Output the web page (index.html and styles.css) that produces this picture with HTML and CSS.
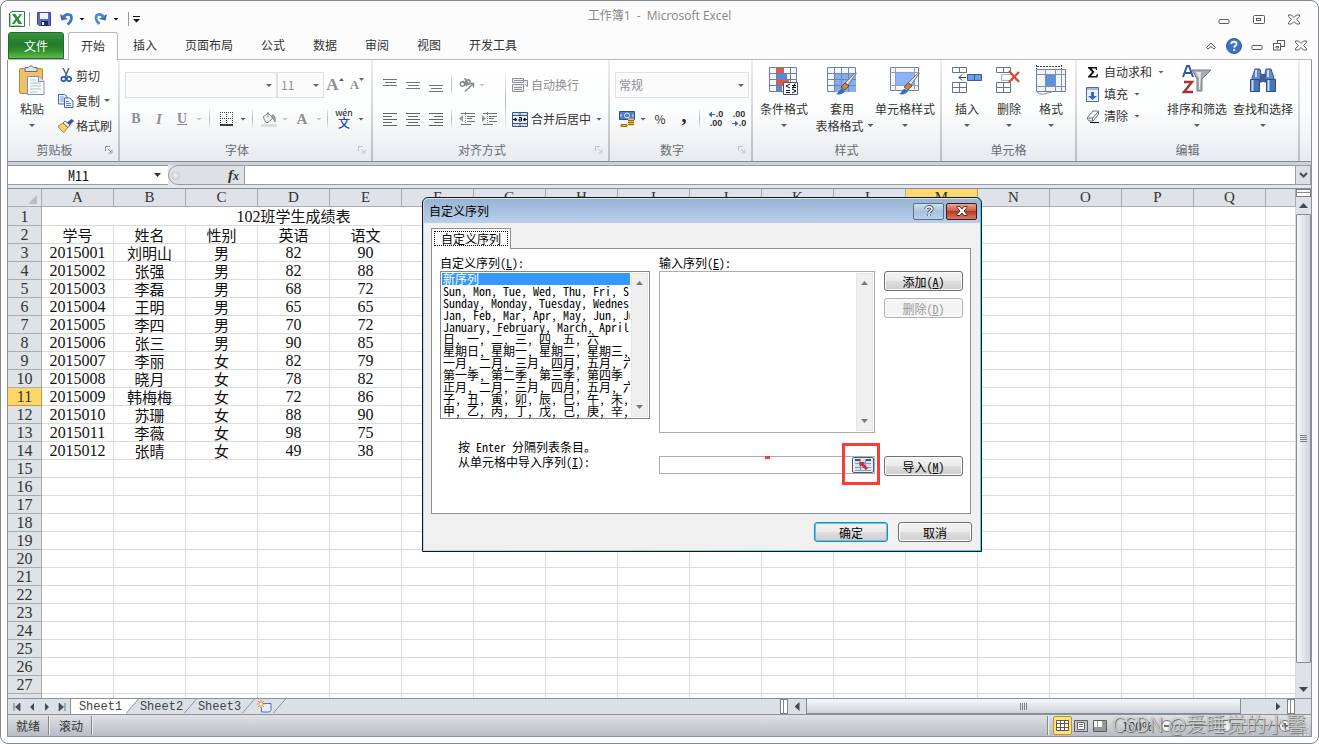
FILE: index.html
```html
<!DOCTYPE html>
<html lang="zh-CN">
<head>
<meta charset="utf-8">
<title>工作簿1 - Microsoft Excel</title>
<link rel="stylesheet" href="styles.css">
</head>
<body>
<div class="window">
  <header class="titlebar">
    <div class="qat">
      <svg width="16" height="16" viewBox="0 0 16 16"><path d="M.5 2.500 3 .5h12.500v15H.5z" fill="#fff" stroke="#2c7a45"/><path d="M1.500 3v11.500h11" stroke="#9ed0a0" fill="none"/><path d="M3 3h3.500l2 3.500L11 3h2L9.700 8l3.500 5H9.700L7.600 9.700 5.500 13H2.800l3.600-5z" fill="#2b8f35"/></svg>
      <i class="bar"></i>
      <button aria-label="保存"><svg width="14" height="14" viewBox="0 0 14 14"><path d="M.5.5h13v13H2L.5 12z" fill="#5d68cc" stroke="#3f479c"/><path d="M3 1h8v6H3z" fill="#eef4ff"/><path d="M4 9h7v5H4z" fill="#25295c"/><path d="M5 10h2v3H5z" fill="#fff"/></svg></button>
      <button class="undo" aria-label="撤消"><svg width="14" height="14" viewBox="0 0 14 14"><path d="M0 2l1.500 6.500L8 7z" fill="#3668b8"/><path d="M3 5.500C6 1 12 1.500 11.500 6.500c-.2 2.500-2 4.500-4 6" fill="none" stroke="#3f74c6" stroke-width="2.600"/></svg></button>
      <i class="caret dark"></i>
      <button class="undo" aria-label="恢复"><svg width="14" height="14" viewBox="0 0 14 14"><path d="M13 2l-1.500 6.500L5 7z" fill="#3668b8"/><path d="M10 5.500C7 1 1.500 1.500 2 6.500c.2 2.500 2 4 3.500 5.500" fill="none" stroke="#4f88d8" stroke-width="2.600"/></svg></button>
      <i class="caret dark"></i>
      <i class="bar second"></i>
      <svg width="7" height="7" viewBox="0 0 7 7"><path d="M0 0h7v1H0zM0 3h7L3.500 6.500z" fill="#111"/></svg>
    </div>
    <h1>工作簿1&nbsp; -&nbsp; Microsoft Excel</h1>
    <div class="winctl">
      <button aria-label="最小化"><svg width="12" height="11" viewBox="0 0 12 11"><rect x="1" y="5.500" width="10" height="4" rx="1" fill="#fff" stroke="#555a66"/></svg></button>
      <button aria-label="还原"><svg width="12" height="11" viewBox="0 0 12 11"><rect x=".5" y="1.500" width="11" height="8" rx="1" fill="#fff" stroke="#555a66"/><rect x="3.500" y="4.500" width="4" height="2" fill="#fff" stroke="#555a66"/></svg></button>
      <button aria-label="关闭"><svg width="12" height="11" viewBox="0 0 12 11"><path d="M.5 1h3L6 3.500 8.500 1h3v1.500L8.500 5.500l3 3V10h-3L6 7.500 3.500 10h-3V8.500l3-3-3-3z" fill="#fff" stroke="#555a66"/></svg></button>
    </div>
  </header>

  <nav class="tabs">
    <button class="file">文件</button>
    <button class="tab active">开始</button>
    <button class="tab">插入</button>
    <button class="tab">页面布局</button>
    <button class="tab">公式</button>
    <button class="tab">数据</button>
    <button class="tab">审阅</button>
    <button class="tab">视图</button>
    <button class="tab">开发工具</button>
    <div class="docctl">
      <button aria-label="折叠功能区"><svg width="10" height="8" viewBox="0 0 10 8"><path d="M.5 5.500 5 1l4.500 4.500L8 7 5 4.500 2 7z" fill="#fff" stroke="#555a66"/></svg></button>
      <button aria-label="帮助"><svg width="16" height="16" viewBox="0 0 16 16"><circle cx="8" cy="8" r="7.500" fill="#3f73c6" stroke="#2b58a5"/><path d="M5.300 6C5.500 3 10.500 3 10.500 6c0 1.700-2.300 1.700-2.300 3.500M8.200 11v1.800" stroke="#fff" stroke-width="1.900" fill="none"/></svg></button>
      <button aria-label="最小化窗口"><svg width="12" height="11" viewBox="0 0 12 11"><rect x="1" y="5.500" width="10" height="4" rx="1" fill="#fff" stroke="#555a66"/></svg></button>
      <button aria-label="还原窗口"><svg width="12" height="11" viewBox="0 0 12 11"><rect x="4.500" y=".5" width="7" height="6" fill="#fff" stroke="#555a66"/><rect x=".5" y="3.500" width="7" height="6.500" fill="#fff" stroke="#555a66"/><path d="M3 6.500h2.500v1.500H3z" fill="none" stroke="#555a66"/></svg></button>
      <button aria-label="关闭窗口"><svg width="12" height="11" viewBox="0 0 12 11"><path d="M.5 1h3L6 3.500 8.500 1h3v1.500L8.500 5.500l3 3V10h-3L6 7.500 3.500 10h-3V8.500l3-3-3-3z" fill="#fff" stroke="#555a66"/></svg></button>
    </div>
  </nav>

  <div class="client">
    <section class="ribbon">
      <div class="group g-clip">
        <div class="tools">
          <button class="big w46"><svg width="28" height="31" viewBox="0 0 28 31"><rect x="1.500" y="3.500" width="23" height="25" rx="1.500" fill="#f0c067" stroke="#b98a3e"/><path d="M7 2.500h3.500Q13-1 15.500 2.500H19v4H7z" fill="#dfe2e6" stroke="#6a6d72"/><path d="M9.500 11.500h11l5.500 5v13H9.500z" fill="#fff" stroke="#7c90b4"/><path d="M20.500 11.500v5H26" fill="#dbe5f5" stroke="#7c90b4"/><path d="M12 15h6M12 18h11M12 21h11M12 24h11M12 27h8" stroke="#a9bbd9"/></svg><span>粘贴</span><i class="caret"></i></button>
          <div class="stack pitch25">
            <button class="small"><svg width="16" height="15" viewBox="0 0 16 15"><path d="M5 0l4.500 9M11 0L7 9" stroke="#51688f" stroke-width="1.500"/><circle cx="5.500" cy="11" r="2.200" fill="none" stroke="#2c59b5" stroke-width="1.700"/><circle cx="11" cy="11" r="2.200" fill="none" stroke="#2c59b5" stroke-width="1.700"/></svg>剪切</button>
            <button class="small"><svg width="16" height="14" viewBox="0 0 16 14"><path d="M.5.500h6l2.500 2V10H.5z" fill="#e8f0fc" stroke="#3e66ad"/><path d="M2 3h4M2 5h4M2 7h4" stroke="#7f9fd2"/><path d="M6.500 4h5l3.500 3v6.500H6.500z" fill="#f4f8ff" stroke="#3e66ad"/><path d="M8 7.500h3M8 9.500h5M8 11.500h5" stroke="#5f86c8"/></svg>复制<i class="caret"></i></button>
            <button class="small"><svg width="16" height="14" viewBox="0 0 16 14"><path d="M0 7l5-3 5 4-4 5.500C4 12 1 10 0 7z" fill="#f1d36e" stroke="#9a7a28" stroke-width=".8"/><path d="M5 4l2-2 5 4-2 2.500z" fill="#eee" stroke="#555" stroke-width=".8"/><path d="M9 3.500L13.500 0 16 2l-4 4z" fill="#3d4f96"/></svg>格式刷</button>
          </div>
        </div>
        <div class="caption"><span>剪贴板</span><svg class="launch" viewBox="0 0 8 8"><path d="M.5 5V.5H5M3 3l3 3M7 3.500V7H3.500" stroke="#92969c" fill="none"/></svg></div>
      </div>

      <div class="group g-font">
        <div class="tools col">
          <div class="line">
            <select class="w152" aria-label="字体" disabled><option></option></select><select class="w47" aria-label="字号" disabled><option>11</option></select>
            <button class="t22 serif muted big-a">A<svg width="5" height="3" viewBox="0 0 5 3"><path d="M0 3l2.500-3L5 3z" fill="#666"/></svg></button><button class="t22 serif muted sm-a">A<svg width="5" height="3" viewBox="0 0 5 3"><path d="M0 0l2.500 3L5 0z" fill="#666"/></svg></button>
          </div>
          <div class="line">
            <button class="t22 serif muted"><b>B</b></button><button class="t24 serif muted"><em>I</em></button><button class="t22 serif muted"><u>U</u></button><i class="caret pale c12"></i>
            <i class="sep"></i>
            <button class="t24" aria-label="边框"><svg width="13" height="14" viewBox="0 0 13 14"><path d="M0 .5h13M.5 0v12M12.500 0v12M6.500 0v12M0 6.500h13" stroke="#444" stroke-dasharray="1 1"/><path d="M0 13h13" stroke="#000" stroke-width="1.500"/></svg></button><i class="caret c10"></i>
            <i class="sep"></i>
            <button class="t24" aria-label="填充颜色"><svg width="16" height="16" viewBox="0 0 16 16"><path d="M2 6l5-4 5 5-5 4.500H5z" fill="#f2f2f2" stroke="#8a8a8a"/><path d="M7 1v5M11 4c3 0 3.500 3 3 7-1-2-2-3-3-4z" fill="#a5a5a5" stroke="#8a8a8a"/><path d="M0 13h16v3H0z" fill="#dedede"/></svg></button><i class="caret pale c8"></i>
            <button class="t26 serif muted">A</button><i class="caret pale c8"></i>
            <i class="sep"></i>
            <button class="t24 wen"><span>wén</span><b>文</b></button><i class="caret c10"></i>
          </div>
        </div>
        <div class="caption"><span>字体</span><svg class="launch" viewBox="0 0 8 8"><path d="M.5 5V.5H5M3 3l3 3M7 3.500V7H3.500" stroke="#c2c5ca" fill="none"/></svg></div>
      </div>

      <div class="group g-align">
        <div class="tools">
          <div class="pair w126">
            <div class="line">
              <button class="t23" aria-label="顶端对齐"><svg width="14" height="14" viewBox="0 0 14 14"><path d="M0 1.500h14M2 4.500h11M0 7.500h14" stroke="#70747a"/></svg></button><button class="t23" aria-label="垂直居中"><svg width="14" height="14" viewBox="0 0 14 14"><path d="M0 4.500h14M2 7.500h11M0 10.500h14" stroke="#70747a"/></svg></button><button class="t23" aria-label="底端对齐"><svg width="14" height="14" viewBox="0 0 14 14"><path d="M0 7.500h14M2 10.500h11M0 13.500h14" stroke="#70747a"/></svg></button>
              <i class="sep"></i>
              <button class="t22" aria-label="方向"><svg width="16" height="14" viewBox="0 0 16 14"><g fill="none" stroke="#84878c" stroke-width="1.400"><path d="M6 13.500L14 6M10.500 5.500H14.500v4"/><circle cx="3.500" cy="6" r="2.200"/><path d="M4 3l4 5"/><circle cx="9" cy="4" r="2.200"/><path d="M5.500 0l4 6"/></g></svg></button><i class="caret pale c8"></i>
            </div>
            <div class="line">
              <button class="t23" aria-label="左对齐"><svg width="14" height="13" viewBox="0 0 14 13"><path d="M0 .5h14M0 3.500h9M0 6.500h14M0 9.500h9M0 12.500h14" stroke="#60646a"/></svg></button><button class="t23" aria-label="居中"><svg width="14" height="13" viewBox="0 0 14 13"><path d="M0 .5h14M2 3.500h10M0 6.500h14M2 9.500h10M0 12.500h14" stroke="#60646a"/></svg></button><button class="t23" aria-label="右对齐"><svg width="14" height="13" viewBox="0 0 14 13"><path d="M0 .5h14M5 3.500h9M0 6.500h14M5 9.500h9M0 12.500h14" stroke="#60646a"/></svg></button>
              <i class="sep"></i>
              <button class="t22" aria-label="减少缩进"><svg width="16" height="14" viewBox="0 0 16 14"><path d="M6.500 0v14" stroke="#888" stroke-dasharray="1 1"/><path d="M2 1.500h14M8 4.500h8M8 6.500h5M8 9.500h8M2 12.500h10" stroke="#70747a"/><path d="M0 6.500L4 3v7z" fill="#999"/></svg></button><button class="t22" aria-label="增加缩进"><svg width="16" height="14" viewBox="0 0 16 14"><path d="M6.500 0v14" stroke="#888" stroke-dasharray="1 1"/><path d="M2 1.500h14M8 4.500h8M8 6.500h5M8 9.500h8M2 12.500h10" stroke="#70747a"/><path d="M5 6.500L1 3v7z" fill="#999"/></svg></button>
            </div>
          </div>
          <i class="sep tall"></i>
          <div class="pair">
            <button class="small muted"><svg width="16" height="16" viewBox="0 0 16 16"><path d="M.5 1.500h11v4H.5zM.5 7.500h11v7H.5zM2 3.500h13.500v6l-2-2M2 10.500h8M2 12.500h8" fill="#ececec" stroke="#909399"/></svg>自动换行</button>
            <button class="small"><svg width="16" height="15" viewBox="0 0 16 15"><path d="M.5.500h15v14H.5z" fill="#cbdcf4" stroke="#3d557d"/><path d="M0 3.500h16M0 11.500h16M8 0v4M8 11v4" stroke="#3d557d"/><path d="M1 4h14v7H1z" fill="#eef4fd"/><path d="M1 7.500h3M12 7.500h3M3 6l2 1.500L3 9zM13 6l-2 1.500L13 9zM7 5.500h2.500V9H7V7h2" stroke="#111" fill="none"/></svg>合并后居中<i class="caret"></i></button>
          </div>
        </div>
        <div class="caption"><span>对齐方式</span><svg class="launch" viewBox="0 0 8 8"><path d="M.5 5V.5H5M3 3l3 3M7 3.500V7H3.500" stroke="#c2c5ca" fill="none"/></svg></div>
      </div>

      <div class="group g-num">
        <div class="tools col">
          <div class="line"><select class="w134" aria-label="数字格式" disabled><option>常规</option></select></div>
          <div class="line">
            <button class="t24" aria-label="会计数字格式"><svg width="16" height="16" viewBox="0 0 16 16"><path d="M.5.500h15v8H.5z" fill="#4f7ccb" stroke="#294f96"/><circle cx="8" cy="4.500" r="2.500" fill="none" stroke="#dce8fb"/><path d="M2 3v3M14 3v3" stroke="#dce8fb"/><path d="M9 7.500h6v7H9z" fill="#f0bd3c"/><path d="M2 13.500h6v2H2zM9 9.500h6M9 11.500h6M9 13.500h6" stroke="#96680f" fill="#f0bd3c"/></svg></button><i class="caret c8"></i>
            <button class="t26">%</button><button class="t22 serif comma">,</button>
            <i class="sep"></i>
            <button class="t24 dec" aria-label="增加小数位数"><span><svg width="6" height="5" viewBox="0 0 6 5"><path d="M6 2.500H2M3 0L0 2.500 3 5" fill="#3767c0" stroke="#3767c0"/></svg>.0</span><span>.00</span></button><button class="t22 dec" aria-label="减少小数位数"><span>.00</span><span><svg width="6" height="5" viewBox="0 0 6 5"><path d="M0 2.500h4M3 0l3 2.500L3 5" fill="#3767c0" stroke="#3767c0"/></svg>.0</span></button>
          </div>
        </div>
        <div class="caption"><span>数字</span><svg class="launch" viewBox="0 0 8 8"><path d="M.5 5V.5H5M3 3l3 3M7 3.500V7H3.500" stroke="#c2c5ca" fill="none"/></svg></div>
      </div>

      <div class="group g-style">
        <div class="tools">
          <button class="big w54"><svg width="30" height="31" viewBox="0 0 30 31"><path d="M.5 2.500h27v24H.5z" fill="#f4f7fb" stroke="#6f7f98"/><path d="M7 3h7v6H7z" fill="#f0533c"/><path d="M7 9h11v6H7z" fill="#5b87e0"/><path d="M7 15h13v6H7z" fill="#f0533c"/><path d="M7 21h6v5H7z" fill="#5b87e0"/><path d="M7.500 2v25M14.500 2v7M21.500 2v25M0 8.500h28M0 14.500h28M0 20.500h28" stroke="#6f7f98"/><path d="M14.500 17.500h14v12h-14z" fill="#fff" stroke="#44546e"/><path d="M21 19l-4 2 4 2M17 25.500h4M17 27.500h4M23 20.500h4M23 22.500h4M26 18.500l-2 5M23 24l4 2-4 2" stroke="#111" fill="none"/></svg><span>条件格式</span><i class="caret"></i></button>
          <button class="big w62"><svg width="30" height="31" viewBox="0 0 30 31"><path d="M.5 2.500h28v24H.5z" fill="#f4f7fb" stroke="#6f8098"/><path d="M8 9h21v18H8z" fill="#86abef"/><path d="M7.500 2v25M14.500 2v25M21.500 2v25M0 8.500h29M0 14.500h29M0 20.500h29" stroke="#7185a8"/><path d="M29.500 8L21 20l-3-2L28 8z" fill="#ddd" stroke="#666" stroke-width=".8"/><path d="M18 18l4 3-4 4-4-3z" fill="#c58a40" stroke="#5c4125" stroke-width=".8"/><path d="M9 29c3-1 4-6 6-5l3 2c-1 3-6 4-9 3z" fill="#3c6cc0"/></svg><span>套用</span><span class="withcaret">表格格式<i class="caret"></i></span></button>
          <button class="big w64"><svg width="30" height="31" viewBox="0 0 30 31"><path d="M.5 2.500h28v23H.5z" fill="#f4f7fb" stroke="#6f8098"/><path d="M5.500 2v24M24.500 2v24M0 7.500h29M0 20.500h29" stroke="#8f9fb8"/><path d="M6 8h18v12H6z" fill="#8db2fb"/><path d="M29.500 8L21 20l-3-2L28 8z" fill="#ddd" stroke="#666" stroke-width=".8"/><path d="M18 18l4 3-4 4-4-3z" fill="#c58a40" stroke="#5c4125" stroke-width=".8"/><path d="M9 29c3-1 4-6 6-5l3 2c-1 3-6 4-9 3z" fill="#3c6cc0"/></svg><span>单元格样式</span><i class="caret"></i></button>
        </div>
        <div class="caption"><span>样式</span></div>
      </div>

      <div class="group g-cells">
        <div class="tools">
          <button class="big w42"><svg width="30" height="31" viewBox="0 0 30 31"><path d="M.5 2.500h14v5H.5zM7.500 2v6M.5 17.500h14v10H.5zM7.500 17v11M0 22.500h15" fill="#fff" stroke="#62738c"/><path d="M15.500 9.500h14v6h-14z" fill="#6e9be8" stroke="#3a5b99"/><path d="M22.500 9v7" stroke="#3a5b99"/><path d="M14 12.500H7M10 9.500L7 12.500l3 3" fill="none" stroke="#333e50"/></svg><span>插入</span><i class="caret"></i></button>
          <button class="big w42"><svg width="26" height="31" viewBox="0 0 26 31"><path d="M.5 2.500h14v5H.5zM7.500 2v6M.5 17.500h14v10H.5zM7.500 17v11M0 22.500h15" fill="#fff" stroke="#62738c"/><path d="M5.500 9.500h11v6h-11z" fill="#fff" stroke="#4b71c2" stroke-dasharray="1 1"/><path d="M13 6l10 11M23 7L13 17" stroke="#e9422c" stroke-width="2.200"/></svg><span>删除</span><i class="caret"></i></button>
          <button class="big w42"><svg width="32" height="31" viewBox="0 0 32 31"><path d="M1.500 0v4M26.500 0v4M2 1.500h25" stroke="#444" stroke-dasharray="2 1"/><path d="M1.500 4.500h29v22h-29z" fill="#f2f5fa" stroke="#6f8098"/><path d="M11 10h9v11h-9z" fill="#5f90e8"/><path d="M10.500 4v22M20.500 4v22M26.500 4v22M1 9.500h29M1 21.500h29M2 27q2 3 7 2l8-2" stroke="#8493aa" fill="none"/></svg><span>格式</span><i class="caret"></i></button>
        </div>
        <div class="caption"><span>单元格</span></div>
      </div>

      <div class="group g-edit">
        <div class="tools">
          <div class="stack pitch22">
            <button class="small"><svg width="14" height="14" viewBox="0 0 14 14"><path d="M2 2h9v3h-1L9.500 3.500H5.500L8.500 7l-3.500 4h5l1-2h1l-.5 3.500H2v-1L6 7 2 3z" fill="#111"/></svg>自动求和<i class="caret"></i></button>
            <button class="small"><svg width="14" height="15" viewBox="0 0 14 15"><path d="M.5.500h12v14H.5z" fill="#eaf1fc" stroke="#4b6ca8"/><path d="M1 1h11v2H1z" fill="#9db9e6"/><path d="M5 5h3v4h3l-4.500 4L2 9h3z" fill="#3767c8"/></svg>填充<i class="caret"></i></button>
            <button class="small"><svg width="14" height="13" viewBox="0 0 14 13"><path d="M1 8l6-7h5.500v3L7 11H3z" fill="#f5f7fb" stroke="#67738a"/><path d="M1 8h5.500l6-6.500M6.500 8v3" fill="none" stroke="#67738a"/><path d="M4 12.500h9" stroke="#111"/></svg>清除<i class="caret"></i></button>
          </div>
          <button class="big w66"><svg width="30" height="31" viewBox="0 0 30 31"><path d="M1 12L5 1h2l4 11M3 8h6" fill="none" stroke="#2d58b2" stroke-width="2"/><path d="M2 17h8L2 27h9" fill="none" stroke="#a83230" stroke-width="2.400"/><path d="M10 5h19l-9 9v12h-5V14z" fill="#a9adb3" stroke="#767a80"/><path d="M14 7h5l-1 17h-1V13z" fill="#e4e6e9"/></svg><span>排序和筛选</span><i class="caret"></i></button>
          <button class="big w66"><svg width="30" height="31" viewBox="0 0 30 31"><path d="M7 4h5l2 9v4H4v-4zM18 4h5l3 9v4H16v-4z" fill="#6388cb" stroke="#39588f"/><path d="M2.500 14.500h9v12h-9zM18.500 14.500h9v12h-9z" fill="#4a72bd" stroke="#2b4a80"/><path d="M12 9h6v8h-6z" fill="#3c5e9f"/><path d="M4.500 15v11M20.500 15v11M8 5v7M20 5v7" stroke="#c8daf6" stroke-width="2"/></svg><span>查找和选择</span><i class="caret"></i></button>
        </div>
        <div class="caption"><span>编辑</span></div>
      </div>
    </section>

    <div class="formula">
      <div class="namebox"><input value="M11" aria-label="名称框"><i class="caret dark wide"></i></div>
      <div class="fx"><i class="knob"></i><span>f<small>x</small></span></div>
      <input class="formula-input" aria-label="编辑栏">
      <button class="expand" aria-label="展开编辑栏"><svg width="9" height="6" viewBox="0 0 9 6"><path d="M1 1l3.500 3.500L8 1" stroke="#4a4d52" stroke-width="2" fill="none"/></svg></button>
    </div>

    <main class="workspace">
      <div class="sheet"><table id="grid"></table></div>
      <div class="vscroll">
        <i class="split"></i>
        <button aria-label="向上"><i class="tri up"></i></button>
        <i class="vthumb"></i>
        <button aria-label="向下"><i class="tri down"></i></button>
      </div>
    </main>

    <div class="sheetbar">
      <div class="navs">
        <button aria-label="第一张"><svg width="8" height="8" viewBox="0 0 8 8"><path d="M1 0v8M7 0v8L2.500 4z" fill="#444b57" stroke="#444b57" stroke-width=".7"/></svg></button>
        <button aria-label="上一张"><svg width="8" height="8" viewBox="0 0 8 8"><path d="M6 0v8L2 4z" fill="#444b57"/></svg></button>
        <button aria-label="下一张"><svg width="8" height="8" viewBox="0 0 8 8"><path d="M2 0v8l4-4z" fill="#444b57"/></svg></button>
        <button aria-label="最后一张"><svg width="8" height="8" viewBox="0 0 8 8"><path d="M7 0v8M1 0v8l4.500-4z" fill="#444b57" stroke="#444b57" stroke-width=".7"/></svg></button>
      </div>
      <button class="stab on">Sheet1</button>
      <svg class="slant" viewBox="0 0 13 15"><path d="M0 0h12L1 14H0z" fill="#fff"/><path d="M0 14.500L12.500 0" stroke="#8d95a1"/></svg>
      <button class="stab">Sheet2</button>
      <svg class="slant" viewBox="0 0 13 15"><path d="M0 14.500L12.500 0" stroke="#8d95a1"/></svg>
      <button class="stab">Sheet3</button>
      <svg class="slant" viewBox="0 0 13 15"><path d="M0 14.500L12.500 0" stroke="#8d95a1"/></svg>
      <button class="newtab" aria-label="插入工作表"><svg width="15" height="13" viewBox="0 0 15 13"><path d="M5.500 3.500H14v7L12 12H4.500V7" fill="#e4edfb" stroke="#5673a8"/><path d="M4 0v8M0 4h8M1 1l6 6M7 1L1 7" stroke="#e0902a"/><circle cx="4" cy="4" r="1.500" fill="#fff3b0"/></svg></button>
      <svg class="slant" viewBox="0 0 13 15"><path d="M0 14.500L12.500 0" stroke="#8d95a1"/></svg>
      <div class="hscroll">
        <i class="grip"></i>
        <button aria-label="向左"><i class="tri left"></i></button>
        <div class="htrack"><i class="hthumb"></i></div>
        <button aria-label="向右"><i class="tri right"></i></button>
        <i class="grip end"></i>
      </div>
    </div>

    <footer class="status">
      <span>就绪</span><i></i><span>滚动</span><i></i>
      <div class="views">
        <i></i>
        <button class="on" aria-label="普通"><svg width="13" height="11" viewBox="0 0 13 11"><path d="M.5.500h12v10H.5zM0 3.500h13M0 7.500h13M4.500 0v11M8.500 0v11" fill="#fff" stroke="#5f5a48"/></svg></button>
        <button aria-label="页面布局"><svg width="14" height="12" viewBox="0 0 14 12"><path d="M.5.500h13v11H.5z" fill="#c4c6ca" stroke="#5b5d61"/><path d="M3.500 2.500h7v7h-7z" fill="#fff" stroke="#666"/><path d="M5 4.500h4M5 6.500h4" stroke="#777"/></svg></button>
        <button aria-label="分页预览"><svg width="14" height="12" viewBox="0 0 14 12"><path d="M.5.500h13v11H.5z" fill="#999" stroke="#5b5d61"/><path d="M1 1h3v6H1zM5 1h4v6H5z" fill="#fff"/></svg></button>
        <span class="pct">100%</span>
        <svg width="12" height="12" viewBox="0 0 12 12"><circle cx="6" cy="6" r="5.500" fill="#f5f5f5" stroke="#777"/><path d="M3 6h6" stroke="#444" stroke-width="1.500"/></svg>
        <input class="zoom" type="range" aria-label="显示比例" value="50">
        <svg width="12" height="12" viewBox="0 0 12 12"><circle cx="6" cy="6" r="5.500" fill="#f5f5f5" stroke="#777"/><path d="M3 6h6M6 3v6" stroke="#444" stroke-width="1.500"/></svg>
        <svg class="resize" width="10" height="10" viewBox="0 0 10 10"><path d="M7 0h2v2H7zM4 4h2v2H4zM7 4h2v2H7zM0 8h2v2H0zM4 8h2v2H4zM7 8h2v2H7z" fill="#f4f4f4" stroke="#999" stroke-width=".3"/></svg>
      </div>
    </footer>
  </div>
  <div class="watermark">CSDN @爱睡觉的小馨</div>

  <section class="dialog" role="dialog" aria-label="自定义序列">
    <div class="dlg-title"><h2>自定义序列</h2>
      <button class="help" aria-label="帮助"><svg width="10" height="12" viewBox="0 0 10 12"><path d="M2 4C2 1 8 1 8 4c0 2-3 2-3 4M5 9v2" stroke="#4d5b70" stroke-width="3.400" fill="none"/><path d="M2 4C2 1 8 1 8 4c0 2-3 2-3 4M5 9v2" stroke="#fff" stroke-width="1.500" fill="none"/></svg></button>
      <button class="close" aria-label="关闭"><svg width="12" height="10" viewBox="0 0 12 10"><path d="M1 .5h3L6 3l2-2.500h3v1L8 5l3 3.500v1H8L6 7 4 9.500H1v-1L4 5 1 1.500z" fill="#fff" stroke="#5b2a2a"/></svg></button>
    </div>
    <div class="dlg-body">
      <div class="dlg-tab"><button>自定义序列</button></div>
      <div class="panel">
        <div class="lists">
          <div class="field">
            <span id="lbl">自定义序列(<u>L</u>):</span>
            <div class="listbox">
              <ul role="listbox" aria-labelledby="lbl">
                <li role="option" aria-selected="true"><mark>新序列</mark></li>
                <li role="option">Sun, Mon, Tue, Wed, Thu, Fri, S</li>
                <li role="option">Sunday, Monday, Tuesday, Wednes</li>
                <li role="option">Jan, Feb, Mar, Apr, May, Jun, Ju</li>
                <li role="option">January, February, March, April,</li>
                <li role="option">日, 一, 二, 三, 四, 五, 六</li>
                <li role="option">星期日, 星期一, 星期二, 星期三,</li>
                <li role="option">一月, 二月, 三月, 四月, 五月, 六月</li>
                <li role="option">第一季, 第二季, 第三季, 第四季</li>
                <li role="option">正月, 二月, 三月, 四月, 五月, 六月</li>
                <li role="option">子, 丑, 寅, 卯, 辰, 巳, 午, 未,</li>
                <li role="option">甲, 乙, 丙, 丁, 戊, 己, 庚, 辛,</li>
              </ul>
              <div class="sb"><i class="tri up grey"></i><i class="tri down grey"></i></div>
            </div>
          </div>
          <div class="field">
            <label for="entries">输入序列(<u>E</u>):</label>
            <div class="entrybox"><textarea id="entries"></textarea><div class="sb"><i class="tri up grey"></i><i class="tri down grey"></i></div></div>
          </div>
          <div class="side"><button class="btn">添加(<u>A</u>)</button><button class="btn" disabled>删除(<u>D</u>)</button></div>
        </div>
        <div class="import">
          <div class="hint"><p>按 Enter 分隔列表条目。</p><label for="range">从单元格中导入序列(<u>I</u>):</label></div>
          <div class="rangebox"><input id="range"><button class="pick" aria-label="选择区域"><svg width="16" height="12" viewBox="0 0 16 12"><path d="M0 0h16v12H0z" fill="#d5e2f6"/><path d="M0 1h6M11 1h5" stroke="#2f55a0" stroke-width="2"/><path d="M0 4.500h16M0 8.500h16M0 11.500h16M5.500 0v12M10.500 0v12" stroke="#7f9fd2"/><path d="M4 3h6L8.500 4.500 13 9l-2 2-4.500-4.500L5 8z" fill="#d83020"/></svg></button><i class="frame"></i><i class="speck"></i></div>
          <button class="btn">导入(<u>M</u>)</button>
        </div>
      </div>
      <div class="actions"><button class="btn default">确定</button><button class="btn">取消</button></div>
    </div>
  </section>
</div>
<script src="script.js"></script>
</body>
</html>
```

FILE: styles.css
```css
* { box-sizing: border-box; }
body { margin: 0; background: #fff; }
button, input, select, textarea { font: inherit; color: inherit; margin: 0; padding: 0; border: 0; background: none; border-radius: 0; outline: 0; }
button { display: flex; align-items: center; justify-content: center; }
i { font-style: normal; }
svg { display: block; flex: none; }

.window {
  position: relative; height: 100vh; display: flex; flex-direction: column;
  padding: 0 6px 6px; border: 1px solid #858890; border-radius: 8px;
  background: #fcfcfc; overflow: hidden; color: #333;
  font: 12px/16px "Noto Sans CJK SC", sans-serif;
}

/* title bar */
.titlebar { display: grid; grid-template-columns: 1fr auto 1fr; height: 31px; }
.titlebar h1 { margin: 6px 0 0; font: 12px/18px "Open Sans", "Noto Sans CJK SC", sans-serif; color: #868686; }
.qat { display: flex; align-items: center; padding: 5px 0 0 2px; }
.qat button { margin-left: 7px; }
.qat .undo { margin-left: 9px; }
.qat .caret { margin-left: 5px; }
.bar { width: 1px; height: 14px; background: #999; margin-left: 4px; }
.bar.second { margin: 0 4px 0 9px; }
.winctl { display: flex; justify-content: flex-end; gap: 23px; padding: 5px 12px 0 0; }

.caret { display: inline-block; flex: none; width: 6px; height: 3px; background: #5b5e63; clip-path: polygon(0 0, 100% 0, 50% 100%); }
.caret.dark { background: #111; }
.caret.pale { background: #c0c3c7; }
.caret.wide { width: 7px; height: 4px; background: #333; }
.c8 { margin: 0 1px; }
.c10 { margin: 0 2px; }
.c12 { margin: 0 3px; }

/* ribbon tabs */
.tabs { display: flex; height: 28px; margin-left: 1px; border-bottom: 1px solid #b4b7bc; }
.file { width: 56px; color: #fff; background: linear-gradient(#3c9440, #217a2a 45%, #2f8f30 70%, #62bb45); border: 1px solid #1d6b2a; border-radius: 3px 3px 0 0; margin-right: 4px; }
.tab { padding: 0 14px 1px; }
.tab.active { padding: 0 12px 1px; margin: 0 1px -1px 0; background: #fff; border: 1px solid #b4b7bc; border-bottom: 0; border-radius: 3px 3px 0 0; }
.docctl { margin-left: auto; display: flex; align-items: center; gap: 10px; padding-right: 5px; }
.docctl button:nth-child(3) { margin-left: -1px; }

.client { flex: 1; min-height: 0; display: flex; flex-direction: column; border: solid #8d929a; border-width: 0 1px; }

/* ribbon */
.ribbon { display: flex; height: 102px; background: linear-gradient(#fff, #fcfdfd 50%, #e8ebef); border-bottom: 1px solid #868b93; }
.group { flex: none; display: flex; flex-direction: column; border-right: 2px solid; border-image: linear-gradient(#eceef1, #b9bdc4) 1; }
.g-clip { width: 112px; }
.g-font { width: 253px; }
.g-align { width: 237px; }
.g-num { width: 143px; }
.g-style { width: 189px; }
.g-cells { width: 135px; }
.g-edit { width: 223px; }
.tools { display: flex; height: 80px; }
.g-font .tools, .g-num .tools, .g-align .tools { padding-left: 5px; }
.g-style .tools, .g-cells .tools { padding-left: 4px; }
.col, .pair { display: flex; flex-direction: column; gap: 8px; padding-top: 12px; }
.line, .pair > .small { display: flex; align-items: center; height: 26px; }
.caption { display: flex; align-items: center; height: 20px; color: #676b74; }
.caption span { flex: 1; text-align: center; }
.launch { width: 8px; height: 8px; margin: 0 5px 0 4px; }
.big { flex-direction: column; justify-content: flex-start; padding-top: 5px; line-height: 17px; white-space: nowrap; }
.big svg { height: 31px; margin-bottom: 4px; }
.big .caret { margin-top: 7px; }
.big .withcaret { display: flex; align-items: center; gap: 4px; margin-left: 5px; }
.big .withcaret .caret { margin-top: 0; }
.w42 { width: 42px; } .w46 { width: 48px; } .w54 { width: 54px; } .w62 { width: 62px; } .w64 { width: 64px; } .w66 { width: 66px; }
.stack { display: flex; flex-direction: column; }
.pitch25 { padding-top: 3px; }
.pitch25 .small { height: 25px; padding-left: 2px; gap: 2px; }
.pitch22 { padding-top: 1px; width: 87px; }
.pitch22 .small { height: 22px; padding-left: 9px; gap: 4px; }
.small { justify-content: flex-start; gap: 3px; white-space: nowrap; }
.small .caret { margin-left: 2px; }
.muted { color: #8d8f93; }
.serif { font: bold 15px/18px "Liberation Serif", serif; }
.serif b, .serif u { font-size: 14px; }
.big-a { font-size: 17px; }
.sm-a { font-size: 13px; }
.big-a svg, .sm-a svg { margin-bottom: 12px; }
.comma { color: #222; font-size: 20px; padding-bottom: 9px; }
.t22 { width: 22px; } .t23 { width: 23px; } .t24 { width: 24px; } .t26 { width: 26px; }
.sep { flex: none; width: 1px; height: 20px; margin: 0 4px; background: linear-gradient(#eee, #b5b8bd, #eee); }
.sep.tall { height: 56px; margin: 13px 6px 0 1px; }
.w126 { width: 126px; }
.pair > .small { gap: 3px; }
select:disabled { opacity: 1; }
.line select { appearance: none; height: 26px; padding: 0 3px; color: #8d8f93; border: 1px solid #dfe1e4; background: #fbfbfc url("data:image/svg+xml,%3Csvg xmlns='http://www.w3.org/2000/svg' width='6' height='3'%3E%3Cpath d='M0 0h6L3 3z' fill='%23666'/%3E%3C/svg%3E") no-repeat right 4px center; }
.w152 { width: 152px; } .w47 { width: 47px; } .w134 { width: 134px; }
.wen { flex-direction: column; line-height: 9px; color: #111; font-size: 9px; padding-bottom: 2px; }
.wen b { font-size: 12px; line-height: 11px; font-weight: 500; color: #2448b8; }
.dec { flex-direction: column; font: bold 9px/9px "Liberation Sans", sans-serif; }
.dec span { display: flex; align-items: center; gap: 1px; }

/* formula bar */
.formula { display: flex; height: 27px; padding: 0 0 3px; border-top: 3px solid #ced2d8; border-bottom: 1px solid #8a8f97; background: #e3e7ee; }
.formula > * { border-top: 1px solid #979ba2; border-bottom: 1px solid #979ba2; }
.namebox { display: flex; align-items: center; width: 160px; background: #fff; font: 14px/16px "Noto Sans Mono CJK SC", "Liberation Mono", monospace; color: #111; }
.namebox input { width: 141px; text-align: center; }
.namebox .caret { margin-left: 5px; }
.fx { display: flex; align-items: center; justify-content: space-between; width: 77px; padding: 0 5px 0 2px; border: 1px solid #979ba2; border-radius: 10px 0 0 10px; background: #dde0e5; font: italic bold 15px/16px "Liberation Serif", serif; }
.fx small { font-size: 12px; }
.knob { width: 9px; height: 9px; border-radius: 5px; background: radial-gradient(#f2f3f5, #b8bcc2); }
.formula-input { flex: 1; background: #fff; min-width: 0; }
.expand { width: 16px; border: 1px solid #979ba2; background: #dde0e5; }

/* worksheet */
.workspace { flex: 1; min-height: 0; display: flex; overflow: hidden; }
.sheet { flex: 1; min-width: 0; overflow: hidden; background: #fff; }
#grid { width: 100%; table-layout: fixed; border-collapse: separate; border-spacing: 0; color: #111; font: 15px/17px "Noto Sans CJK SC", sans-serif; }
#grid col.head { width: 34px; }
#grid col.data { width: 72px; }
#grid tr { height: 18px; }
#grid th, #grid td { padding: 0; height: 18px; text-align: center; border: solid #d9dadc; border-width: 0 1px 1px 0; white-space: nowrap; }
#grid th { font: 15px/17px "Liberation Serif", serif; background: #dfe2e7; color: #333; border-color: #a8adb5; }
#grid thead th.on { background: linear-gradient(#fcd978, #fdd561); border-color: #c9973f; }
#grid tbody th { font-size: 16px; }
#grid tbody th.on { background: #fdd866; border-color: #c9973f; }
#grid td.num, #grid .n { font: 16px/17px "Liberation Serif", serif; }
.corner i { display: block; width: 9px; height: 9px; margin: 4px 4px 0 auto; background: #b8bdc4; clip-path: polygon(100% 0, 100% 100%, 0 100%); }

.vscroll { width: 15px; display: flex; flex-direction: column; background: #dde1e8; }
.vscroll button { height: 17px; }
.split { height: 8px; border: 1px solid #7c828b; background: linear-gradient(#fff 2px, #888 2px, #888 3px, #fff 3px); }
.vthumb { flex: 1; border: 1px solid #858c98; border-radius: 1px; background: linear-gradient(90deg, #f6f7f9, #cfd4dc); margin-bottom: 18px; display: flex; align-items: center; justify-content: center; }
.vthumb::after { content: ""; width: 7px; height: 8px; background: repeating-linear-gradient(#7b818c 0 1px, transparent 1px 2px); }
.tri { display: block; background: #43474e; }
.tri.up { width: 9px; height: 5px; clip-path: polygon(50% 0, 100% 100%, 0 100%); }
.tri.down { width: 9px; height: 5px; clip-path: polygon(0 0, 100% 0, 50% 100%); }
.tri.left { width: 5px; height: 9px; clip-path: polygon(100% 0, 100% 100%, 0 50%); }
.tri.right { width: 5px; height: 9px; clip-path: polygon(0 0, 100% 50%, 0 100%); }
.tri.grey { background: #777; width: 7px; height: 4px; }

.sheetbar { display: flex; height: 16px; border-top: 1px solid #8c929c; background: #dbdfe6; }
.navs { display: flex; align-items: center; width: 63px; padding-left: 4px; gap: 6px; border-right: 1px solid #8c929c; }
.navs button { width: 9px; }
.stab { width: 45px; color: #444; font: 12px/14px "Liberation Mono", monospace; padding-top: 1px; }
.stab.on { width: 55px; padding-left: 4px; background: #fff; }
.slant { width: 13px; height: 15px; }
.newtab { width: 18px; }
.hscroll { flex: 0 0 531px; margin-left: auto; display: flex; }
.hscroll button { width: 18px; }
.grip { width: 8px; border: 1px solid #7c828b; background: linear-gradient(90deg, #fff 2px, #888 2px, #888 3px, #fff 3px); }
.grip.end { margin: 0 16px 0 0; }
.htrack { flex: 1; display: flex; padding-right: 28px; }
.hthumb { flex: 1; border: 1px solid #858c98; border-top: 0; background: linear-gradient(#f6f7f9, #cfd4dc); }
.hthumb::after { content: ""; display: block; width: 8px; height: 7px; margin: 4px auto; background: repeating-linear-gradient(90deg, #7b818c 0 1px, transparent 1px 2px); }

.status { display: flex; align-items: center; height: 23px; padding-left: 8px; border: solid #8c929c; border-width: 1px 0; background: linear-gradient(#dfe1e5, #b9bdc3); }
.status i { width: 2px; height: 19px; margin: 0 9px 0 8px; border-left: 1px solid #85898f; border-right: 1px solid #eee; }
.views { margin-left: auto; display: flex; align-items: center; }
.views i { margin: 0 4px 0 0; }
.views button { width: 19px; height: 19px; }
.views .on { border: 1px solid #c4912f; border-radius: 2px; background: #fde27c; }
.pct { margin: 0 8px 0 12px; }
.zoom { appearance: none; width: 106px; height: 12px; background: linear-gradient(#777, #777) center / 100% 1px no-repeat; }
.zoom::-webkit-slider-thumb { appearance: none; width: 9px; height: 12px; background: #eceef0; border: 1px solid #70747b; border-radius: 1px 1px 5px 5px; }
.resize { margin: 10px 1px 0 9px; }
.watermark { position: absolute; right: 12px; bottom: 3px; font: 300 20px/32px "Noto Sans CJK SC", sans-serif; color: rgba(235, 236, 238, .8); text-shadow: 1px 1px 1px #666, 0 0 1px #777; white-space: nowrap; }

/* dialog window floating over the sheet */
.dialog { position: absolute; left: 421px; top: 196px; width: 560px; height: 355px; display: flex; flex-direction: column; padding: 0 1px 1px; border: 1px solid #15181d; border-radius: 6px 6px 0 0; background: linear-gradient(90deg, #c0d6ee, #3fd0ea); color: #000; font: 12px/15px "Noto Sans Mono CJK SC", "Noto Sans CJK SC", monospace; }
.dlg-title { display: flex; height: 25px; padding: 0 3px 0 5px; align-items: center; border-top: 1px solid #d7e5f4; background: linear-gradient(#98b4d3, #b8d0ea); border-radius: 5px 5px 0 0; }
.dlg-title h2 { flex: 1; margin: 0; font: 12px/16px "Noto Sans CJK SC", sans-serif; }
.dlg-title button { width: 31px; height: 17px; border: 1px solid #5b6f8b; border-radius: 2px; background: linear-gradient(#cfe0f2, #a9c2dd 50%, #b7cfe8); margin-left: 2px; }
.dlg-title .close { border-color: #43181d; background: linear-gradient(#e6a698, #cf5a42 45%, #b93a22 50%, #d97a63); }
.dlg-body { flex: 1; display: flex; flex-direction: column; padding: 5px 8px 0 7px; background: #f0f0f0; }
.dlg-tab { display: flex; height: 21px; margin-bottom: -1px; }
.dlg-tab button { width: 80px; padding: 0 0 2px; border: 1px solid #8c8e98; border-bottom: 0; background: #fff; position: relative; outline: 1px dotted #000; outline-offset: -4px; }
.panel { height: 266px; margin-right: 1px; padding: 7px 7px 0 8px; border: 1px solid #8c8e98; background: #fff; }
.lists, .import { display: grid; grid-template-columns: 210px 216px 79px; gap: 9px; }
.field > span, .field > label { display: block; line-height: 14px; margin-bottom: 1px; }
.listbox { display: flex; height: 148px; padding: 1px; border: 1px solid #828790; }
.listbox ul { flex: 1; min-width: 0; margin: 0; padding: 0; list-style: none; overflow-x: clip; overflow-y: visible; }
.listbox li { height: 12px; line-height: 12px; padding-left: 1px; white-space: pre; }
.listbox li[aria-selected] { background: #39f; color: #fff; }
.listbox mark { background: none; color: inherit; }
.sb { width: 17px; display: flex; flex-direction: column; align-items: center; justify-content: space-between; padding: 7px 0; background: #efefef; margin-left: 1px; border: 1px solid #e6e6e6; }
.entrybox { display: flex; height: 162px; padding: 1px; border: 1px solid #abadb3; }
.entrybox textarea { flex: 1; min-width: 0; resize: none; }
.side { display: flex; flex-direction: column; gap: 7px; padding-top: 15px; }
.btn { height: 20px; border: 1px solid #707070; border-radius: 3px; background: linear-gradient(#f2f2f2, #ebebeb 50%, #ddd 50%, #cfcfcf); box-shadow: inset 0 0 0 1px #fafafa; }
.btn:disabled { color: #9a9a9a; border-color: #adb2b5; background: #f4f4f4; }
.btn.default { border-color: #3c7fb1; box-shadow: inset 0 0 0 1px #48d0f2; }
.import { margin-top: 6px; }
.hint { padding-left: 18px; }
.hint p { margin: 0; }
.hint label { display: block; }
.rangebox { position: relative; display: flex; height: 18px; margin-top: 17px; border: 1px solid #abadb3; }
.rangebox input { flex: 1; min-width: 0; }
.pick { width: 22px; border: 1px solid #555a62; border-radius: 2px; background: #e9ebee; }
.frame { position: absolute; right: -6px; top: -14px; width: 38px; height: 42px; border: 3px solid #fa3c38; }
.speck { position: absolute; left: 105px; top: -1px; width: 5px; height: 3px; background: #fa3c38; }
.import > .btn { margin-top: 17px; }
.actions { display: flex; justify-content: flex-end; gap: 10px; margin-top: 8px; }
.actions .btn { width: 74px; }
```

FILE: script.js
```js
const columns = 'ABCDEFGHIJKLMNOPQ'.split('');
const rows = [
  ['学号', '姓名', '性别', '英语', '语文'],
  ['2015001', '刘明山', '男', '82', '90'],
  ['2015002', '张强', '男', '82', '88'],
  ['2015003', '李磊', '男', '68', '72'],
  ['2015004', '王明', '男', '65', '65'],
  ['2015005', '李四', '男', '70', '72'],
  ['2015006', '张三', '男', '90', '85'],
  ['2015007', '李丽', '女', '82', '79'],
  ['2015008', '晓月', '女', '78', '82'],
  ['2015009', '韩梅梅', '女', '72', '86'],
  ['2015010', '苏珊', '女', '88', '90'],
  ['2015011', '李薇', '女', '98', '75'],
  ['2015012', '张晴', '女', '49', '38']
];
const lastRow = 27;

let html = '<colgroup><col class="head">' + '<col class="data">'.repeat(17) + '<col></colgroup>';
html += '<thead><tr><th class="corner"><i></i></th>';
for (const c of columns) html += `<th${c === 'M' ? ' class="on"' : ''}>${c}</th>`;
html += '<th></th></tr></thead><tbody>';
html += '<tr><th>1</th><td colspan="7"><span class="n">102</span>班学生成绩表</td>' + '<td></td>'.repeat(11) + '</tr>';
for (let r = 2; r <= lastRow + 1; r++) {
  const data = rows[r - 2] || [];
  html += `<tr><th${r === 11 ? ' class="on"' : ''}>${r <= lastRow ? r : ''}</th>`;
  for (let c = 0; c < 18; c++) {
    const v = data[c] || '';
    html += `<td${/^\d+$/.test(v) ? ' class="num"' : ''}>${v}</td>`;
  }
  html += '</tr>';
}
document.getElementById('grid').innerHTML = html + '</tbody>';
```
